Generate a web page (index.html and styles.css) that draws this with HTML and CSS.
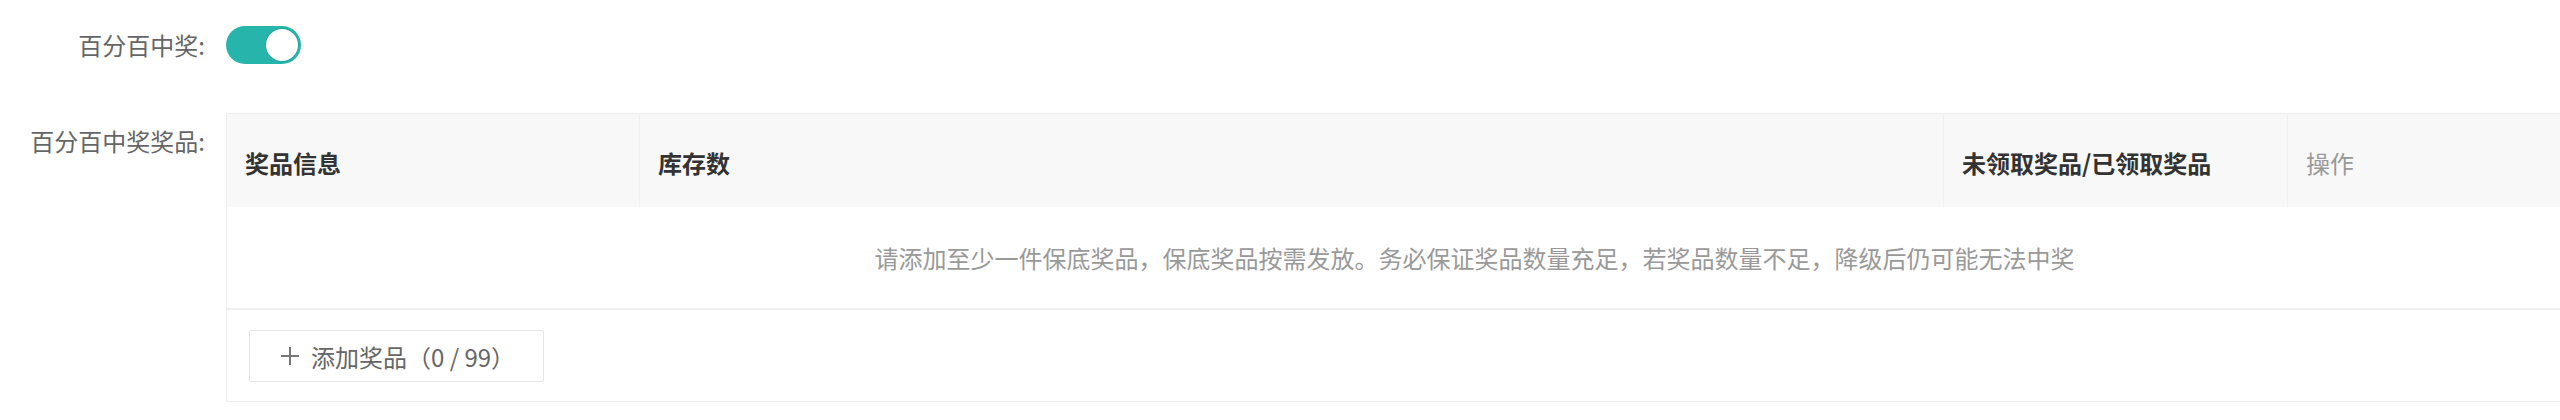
FILE: index.html
```html
<!DOCTYPE html>
<html lang="zh-CN">
<head>
<meta charset="utf-8">
<title>百分百中奖</title>
<link rel="stylesheet" href="styles.css">
</head>
<body>
<div class="form">
  <div class="form-row row-switch">
    <div class="form-label">百分百中奖:</div>
    <div class="form-control">
      <span class="switch is-on"><span class="switch-knob"></span></span>
    </div>
  </div>
  <div class="form-row row-table">
    <div class="form-label label-top">百分百中奖奖品:</div>
    <div class="form-control table-wrap">
      <div class="prize-table">
        <div class="thead">
          <div class="th">奖品信息</div>
          <div class="th">库存数</div>
          <div class="th">未领取奖品/已领取奖品</div>
          <div class="th th-muted">操作</div>
        </div>
        <div class="empty-row">请添加至少一件保底奖品，保底奖品按需发放。务必保证奖品数量充足，若奖品数量不足，降级后仍可能无法中奖</div>
        <div class="tfoot">
          <button class="add-btn" type="button">
            <svg class="plus" width="20" height="20" viewBox="0 0 20 20" aria-hidden="true"><path d="M10 1v18M1 10h18" stroke="#777" stroke-width="2" fill="none"/></svg>
            <span>添加奖品（0 / 99）</span>
          </button>
        </div>
      </div>
    </div>
  </div>
</div>
</body>
</html>
```
FILE: styles.css
```css
html, body {
  margin: 0;
  padding: 0;
  background: #ffffff;
}
body {
  width: 2560px;
  height: 420px;
  overflow: hidden;
  font-family: "Noto Sans CJK SC", "Noto Sans", sans-serif;
  font-size: 24px;
  color: #666666;
}
.form {
  padding-top: 26px;
}
.form-row {
  display: flex;
  gap: 21px;
}
.row-switch {
  align-items: center;
  height: 38px;
}
.row-table {
  margin-top: 49px;
  align-items: flex-start;
}
.form-label {
  width: 205px;
  flex: none;
  text-align: right;
  line-height: 36px;
  color: #666666;
  white-space: nowrap;
}
.label-top {
  padding-top: 10px;
}
.form-control {
  flex: none;
}
.table-wrap {
  flex: 1 1 auto;
  min-width: 0;
  overflow: hidden;
}
.switch {
  display: block;
  position: relative;
  width: 75px;
  height: 38px;
  border-radius: 19px;
  background: #27b4ab;
  box-sizing: border-box;
}
.switch-knob {
  position: absolute;
  top: 3px;
  right: 3px;
  width: 32px;
  height: 32px;
  border-radius: 50%;
  background: #ffffff;
  box-shadow: 0 0 0 1px rgba(30, 150, 140, 0.35);
}
.prize-table {
  width: 2496px;
  border: 1px solid #eeeeee;
  border-right: none;
  box-sizing: border-box;
}
.thead {
  display: grid;
  grid-template-columns: 412px 1304px 344px 435px;
  height: 93px;
  background: #f8f8f8;
}
.th {
  display: flex;
  align-items: center;
  padding: 4px 0 0 18px;
  font-weight: 700;
  color: #333333;
  border-left: 1px solid #f0f0f4;
}
.th:first-child {
  border-left: none;
}
.th-muted {
  font-weight: 400;
  color: #999999;
}
.empty-row {
  height: 101px;
  display: flex;
  align-items: center;
  justify-content: center;
  color: #999999;
  border-bottom: 2px solid #efefef;
}
.tfoot {
  padding: 20px 0 19px 22px;
}
.add-btn {
  display: flex;
  align-items: center;
  gap: 11px;
  width: 295px;
  height: 52px;
  padding: 0 0 0 30px;
  box-sizing: border-box;
  border: 1px solid #e6e6e6;
  border-radius: 2px;
  background: #ffffff;
  font-family: inherit;
  font-size: 24px;
  color: #666666;
  cursor: pointer;
}
.plus {
  display: block;
  flex: none;
}
```
